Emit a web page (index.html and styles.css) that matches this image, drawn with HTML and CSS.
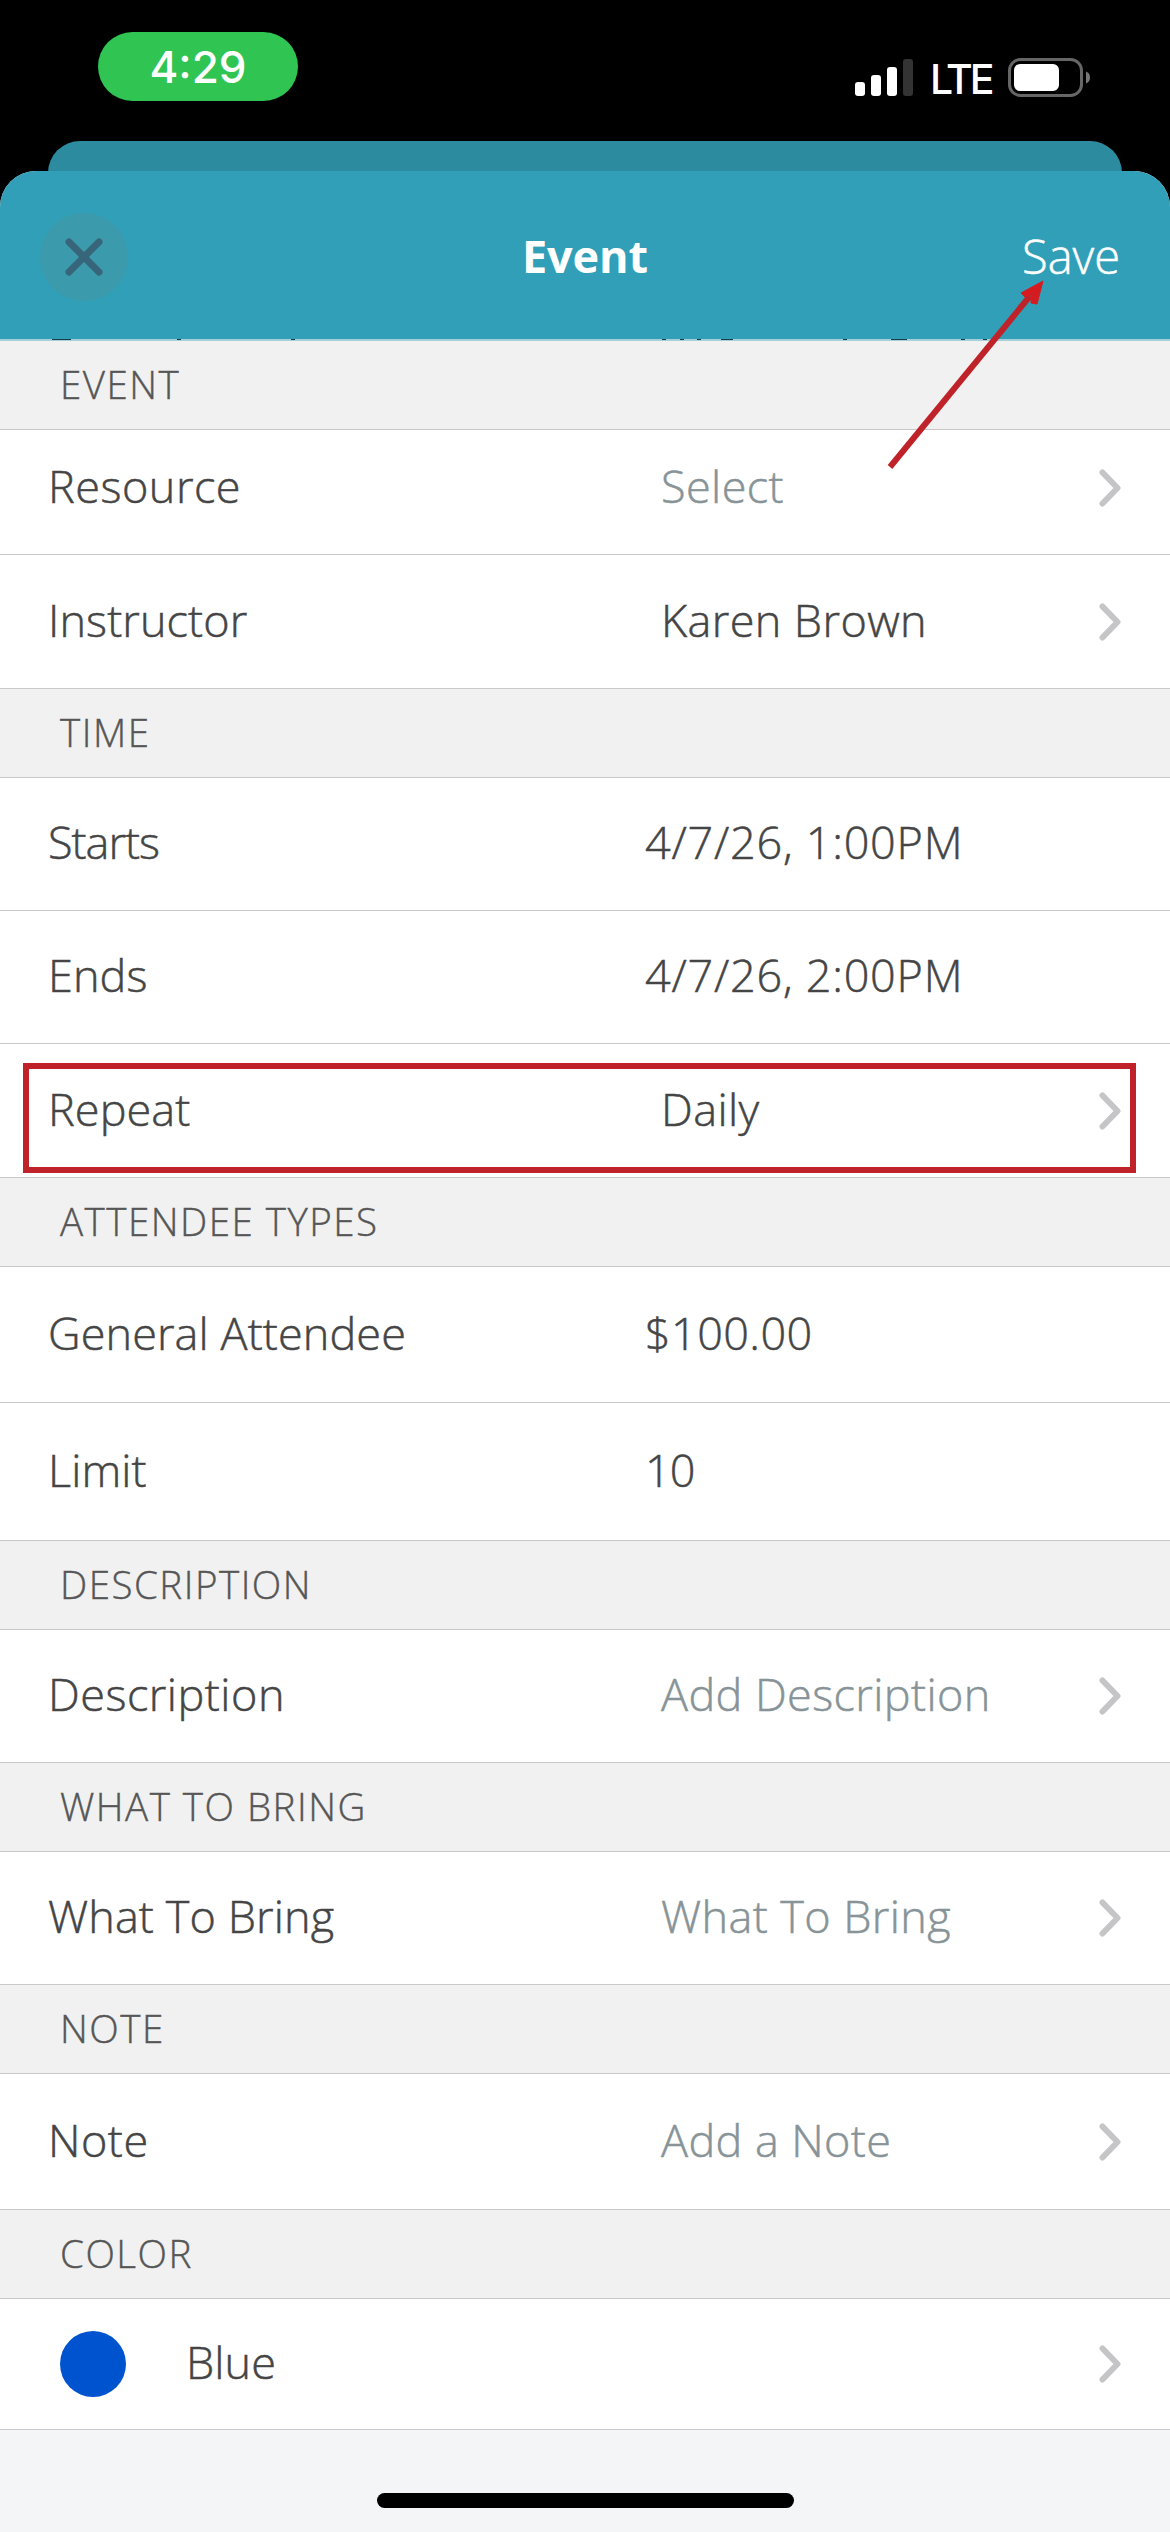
FILE: index.html
```html
<!DOCTYPE html>
<html lang="en">
<head>
<meta charset="utf-8">
<title>Event</title>
<link rel="stylesheet" href="styles.css">
</head>
<body>
<svg class="defs" width="0" height="0" aria-hidden="true">
  <symbol id="chevron" viewBox="0 0 22 38"><path d="M3.5 3.5 18.5 19 3.5 34.5"/></symbol>
</svg>
<div class="screen">
  <div class="status">
    <div class="clock">4:29</div>
    <div class="indicators">
      <svg class="signal" viewBox="0 0 58 38">
        <rect x="0" y="23" width="10" height="14" rx="3"/>
        <rect x="16" y="16" width="10" height="21" rx="3"/>
        <rect x="32" y="8" width="10" height="29" rx="3"/>
        <rect class="off" x="48" y="0" width="10" height="37" rx="3"/>
      </svg>
      <span class="network">LTE</span>
      <svg class="battery" viewBox="0 0 83 40">
        <rect class="case" x="1.5" y="1.5" width="72" height="36" rx="11"/>
        <rect x="6" y="6" width="45" height="27" rx="6"/>
        <path class="cap" d="M78 13.5a6.5 6.5 0 0 1 0 12z"/>
      </svg>
    </div>
  </div>
  <div class="sheet-behind"></div>
  <div class="sheet">
    <header class="bar">
      <button class="close" aria-label="Close">
        <svg viewBox="0 0 38 38"><path d="M4 4 34 34M34 4 4 34"/></svg>
      </button>
      <h1>Event</h1>
      <span class="save">Save</span>
    </header>
    <svg class="peek" viewBox="0 0 1170 2"><path d="M52 .5h19M177 .5h4M291 .5h4M662 .5h4M680 .5h4M697 .5h4M721 .5h12M843 .5h4M891 .5h16M961 .5h4M983 .5h4"/></svg>

    <h2>EVENT</h2>
    <div class="row scrolled"><span class="label wide">Resource</span><span class="value hint">Select</span><svg class="chevron"><use href="#chevron"/></svg></div>
    <div class="row last"><span class="label">Instructor</span><span class="value">Karen Brown</span><svg class="chevron"><use href="#chevron"/></svg></div>

    <h2>TIME</h2>
    <div class="row inline"><span class="label tight">Starts</span><span class="value date">4/7/26, 1:00PM</span></div>
    <div class="row inline"><span class="label">Ends</span><span class="value date">4/7/26, 2:00PM</span></div>
    <div class="row last highlighted"><span class="label">Repeat</span><span class="value">Daily</span><svg class="chevron"><use href="#chevron"/></svg></div>

    <h2>ATTENDEE TYPES</h2>
    <div class="row inline tall"><span class="label">General Attendee</span><span class="value">$100.00</span></div>
    <div class="row inline taller"><span class="label">Limit</span><span class="value tight">10</span></div>

    <h2>DESCRIPTION</h2>
    <div class="row"><span class="label wide">Description</span><span class="value hint">Add Description</span><svg class="chevron"><use href="#chevron"/></svg></div>

    <h2>WHAT TO BRING</h2>
    <div class="row"><span class="label">What To Bring</span><span class="value hint">What To Bring</span><svg class="chevron"><use href="#chevron"/></svg></div>

    <h2>NOTE</h2>
    <div class="row tall"><span class="label wide">Note</span><span class="value hint">Add a Note</span><svg class="chevron"><use href="#chevron"/></svg></div>

    <h2>COLOR</h2>
    <div class="row color"><span class="swatch"></span><span class="label">Blue</span><svg class="chevron"><use href="#chevron"/></svg></div>
  </div>
  <footer><div class="home"></div></footer>
  <svg class="arrow" viewBox="0 0 170 200"><path class="shaft" d="M10 187 150 16"/><path class="head" d="M163 1 141 13 145 17 151 15 151 23 157 24Z"/></svg>
</div>
</body>
</html>
```
FILE: styles.css
```css
* { box-sizing: border-box; }
body { margin: 0; background: #000; }
.defs { position: absolute; }

.screen {
  position: relative;
  display: flex;
  flex-direction: column;
  width: 1170px;
  height: 2532px;
  overflow: hidden;
  background: #000;
  color: #454545;
  font: 300 45px "Open Sans", "Noto Sans", sans-serif;
}

.status {
  display: flex;
  justify-content: space-between;
  align-items: flex-start;
  height: 141px;
  padding: 32px 79px 0 98px;
  color: #fff;
  font-family: Inter, sans-serif;
}
.clock {
  width: 200px;
  height: 69px;
  border-radius: 35px;
  background: #30c553;
  font-size: 44px;
  font-weight: 500;
  line-height: 70px;
  text-align: center;
}
.indicators { display: flex; padding-top: 26px; }
.signal { width: 58px; height: 38px; margin-top: 1px; fill: #fff; }
.signal .off { fill: #333; }
.network { margin: 0 16px 0 17px; width: 62px; font-size: 41px; font-weight: 500; line-height: 42px; letter-spacing: -3.2px; white-space: nowrap; }
.battery { width: 83px; height: 40px; fill: #fff; }
.battery .case { fill: none; stroke: #666; stroke-width: 3; }
.battery .cap { fill: #777; }

.sheet-behind {
  height: 60px;
  margin: 0 48px -30px;
  border-radius: 32px 32px 0 0;
  background: #2c8b9f;
}
.sheet {
  position: relative;
  overflow: hidden;
  border-radius: 36px 36px 0 0;
  background: #fff;
}

.bar {
  display: grid;
  grid-template-columns: 1fr auto 1fr;
  align-items: center;
  height: 168px;
  padding: 0 50px 0 40px;
  background: #319fb7;
  color: #fff;
}
.close {
  display: grid;
  place-items: center;
  width: 88px;
  height: 88px;
  margin-top: 4px;
  padding: 0;
  border: 0;
  border-radius: 50%;
  background: #3b9aac;
}
.close svg { width: 38px; height: 38px; fill: none; stroke: #37667a; stroke-width: 7; stroke-linecap: round; }
h1 { margin: 0; padding: 2px 0 0 10px; font-size: 45px; font-weight: 700; line-height: 60px; letter-spacing: -.1px; }
.save { justify-self: end; padding-top: 1px; font-size: 47px; line-height: 60px; -webkit-text-stroke: .5px; }
.peek { display: block; width: 1170px; height: 2px; background: #a5cfd9; fill: none; stroke: #1d3c4a; stroke-width: 1; }

h2 {
  margin: 0;
  height: 89px;
  padding: 0 59px 0 60px;
  border-bottom: 1px solid #c8c8c8;
  background: #f1f1f1;
  color: #565656;
  font-size: 38.5px;
  font-weight: 300;
  line-height: 87px;
  letter-spacing: 1.5px;
  -webkit-text-stroke: .4px;
}

.row {
  position: relative;
  display: grid;
  grid-template-columns: 613px 1fr 22px;
  align-items: center;
  height: 133px;
  padding: 0 49px 0 48px;
  border-bottom: 1px solid #c8c8c8;
  background: #fff;
}
.row.inline { grid-template-columns: 597px 1fr; }
.row.last { height: 134px; }
.row.tall { height: 136px; }
.row.taller { height: 138px; }
.row.scrolled { height: 125px; padding-bottom: 8px; }
.label, .value { padding-bottom: 4px; line-height: 60px; white-space: nowrap; -webkit-text-stroke: .5px; }
.label { letter-spacing: .1px; }
.value { letter-spacing: .4px; }
.label.wide { letter-spacing: .5px; }
.value.date { letter-spacing: .75px; }
.label.tight, .value.tight { letter-spacing: -1px; }
.hint { color: #879397; }
.chevron { width: 22px; height: 38px; fill: none; stroke: #c5c5c7; stroke-width: 6; stroke-linecap: round; stroke-linejoin: round; }

.highlighted::after {
  content: "";
  position: absolute;
  inset: 19px 34px 4px 23px;
  border: 6px solid #bf2228;
}

.row.color { grid-template-columns: 66px 1fr 22px; column-gap: 60px; height: 131px; padding-left: 60px; }
.swatch { width: 66px; height: 66px; border-radius: 50%; background: #0053cf; }

footer { flex: 1; padding-top: 63px; background: #f4f5f6; }
.home { width: 417px; height: 15px; margin: 0 auto; border-radius: 8px; background: #000; }

.arrow { position: absolute; left: 880px; top: 280px; width: 170px; height: 200px; }
.shaft { fill: none; stroke: #bf2228; stroke-width: 6; }
.head { fill: #d41c20; stroke: #d41c20; stroke-width: 1; }
```
